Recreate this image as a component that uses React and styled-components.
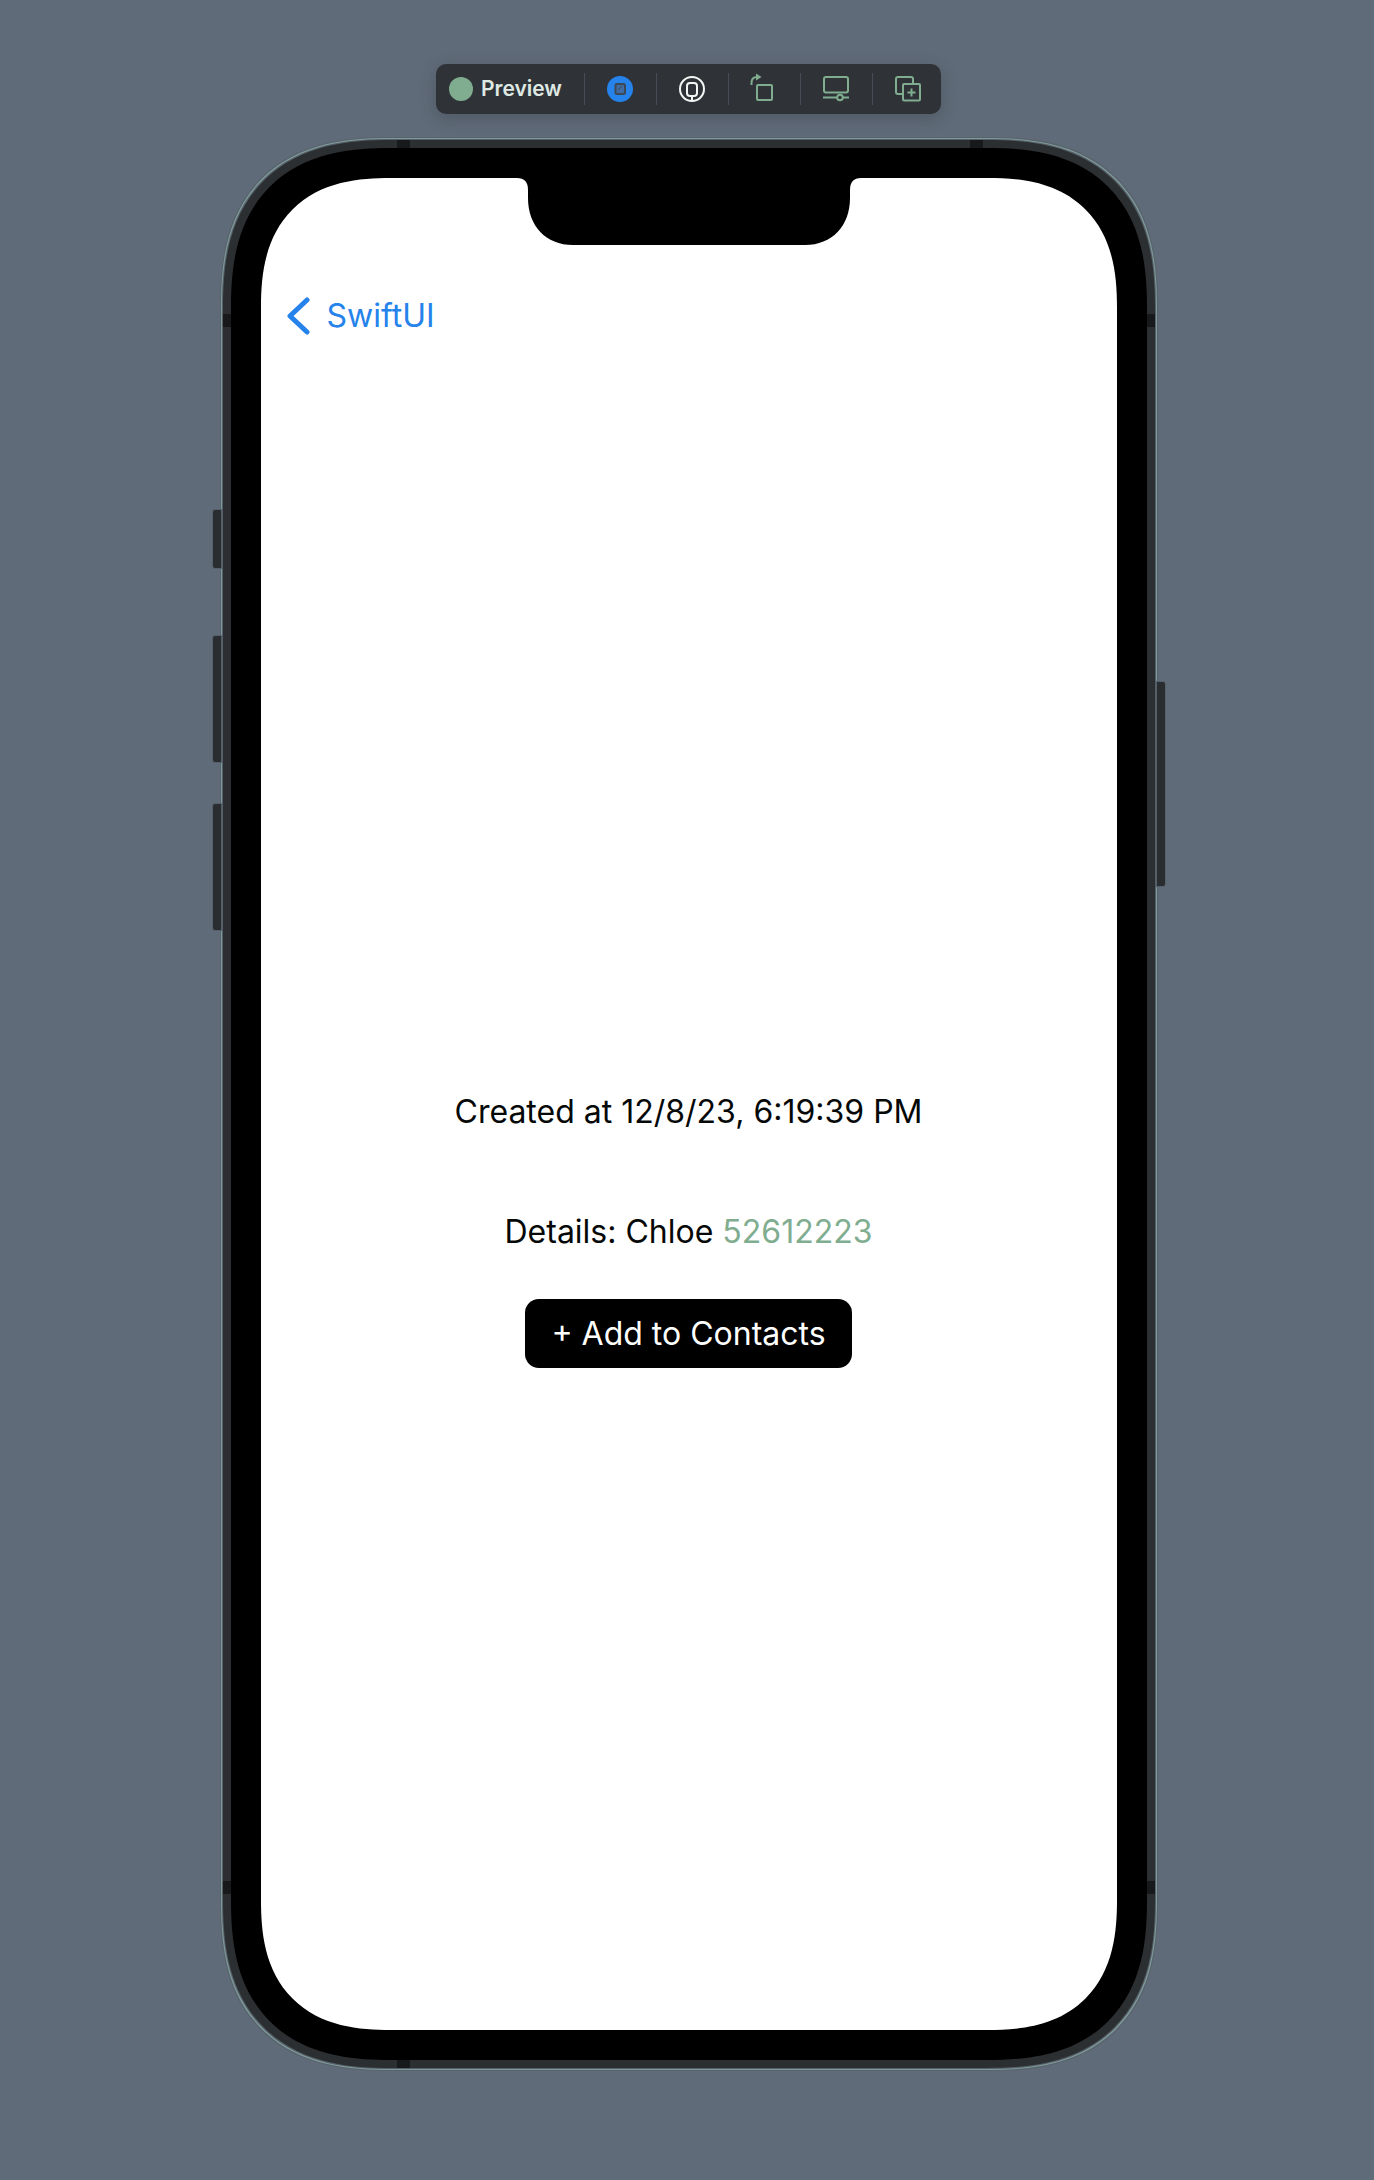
import React from "react";
import styled, { createGlobalStyle } from "styled-components";

const GlobalStyle = createGlobalStyle`
  * { box-sizing: border-box; }
  body {
    margin: 0;
    background: #606b79;
    font-family: Inter, "Liberation Sans", sans-serif;
  }
`;

const Page = styled.main`
  min-height: 100vh;
  display: flex;
  flex-direction: column;
  align-items: center;
  gap: 26px;
  padding: 64px 0 64px 3px;
`;

const Toolbar = styled.div`
  display: flex;
  align-items: center;
  height: 50px;
  border-radius: 10px;
  background: #2f3337;
  box-shadow: 0 4px 16px rgba(40, 46, 50, 0.3);
`;

const Status = styled.div`
  display: flex;
  align-items: center;
  gap: 8px;
  width: 148px;
  padding-left: 13px;
  color: #dfe9e3;
  font-size: 21px;
  line-height: 28px;
  font-weight: 600;
`;

const StatusDot = styled.span`
  width: 24px;
  height: 24px;
  border-radius: 50%;
  background: #80ad8f;
`;

const ToolButton = styled.button`
  display: flex;
  align-items: center;
  justify-content: center;
  width: ${(p) => (p.$last ? "69px" : "72px")};
  height: 32px;
  padding: 0 1px 0 0;
  border: 0;
  border-left: 1px solid #454c55;
  background: none;
  color: ${(p) => p.$color || "#80ad8f"};
`;

const Phone = styled.div`
  position: relative;
  width: 932px;
  max-width: 100%;
  padding: 8px;
  background: #2c2f32;
  border-radius: 140px;
  box-shadow: 0 0 0 1px #56606a, 0 0 0 2px #7e9a98, 0 0 0 3px #59636d;
  @supports (corner-shape: superellipse(1.32)) {
    border-radius: 168px;
    corner-shape: superellipse(1.32);
  }
`;

const Bezel = styled.div`
  position: relative;
  padding: 30px;
  background: #000;
  border-radius: 136px;
  @supports (corner-shape: superellipse(1.32)) {
    border-radius: 160px;
    corner-shape: superellipse(1.32);
  }
`;

const Screen = styled.div`
  display: flex;
  flex-direction: column;
  min-height: 1852px;
  padding: 117px 24px 0;
  background: #fff;
  border-radius: 108px;
  color: #050807;
  font-size: 32px;
  line-height: 42px;
  @supports (corner-shape: superellipse(1.32)) {
    border-radius: 130px;
    corner-shape: superellipse(1.32);
  }
`;

const SideButton = styled.span`
  position: absolute;
  ${(p) => p.$side}: -10px;
  top: ${(p) => p.$top}px;
  width: 8px;
  height: ${(p) => p.$length}px;
  border-radius: ${(p) => (p.$side === "left" ? "2px 0 0 2px" : "0 2px 2px 0")};
  background: #2a2d30;
  box-shadow: 0 0 0 1px #56606a;
`;

const Band = styled.span`
  position: absolute;
  ${(p) => p.$edge}: 0;
  ${(p) => p.$from}: ${(p) => p.$at}px;
  width: ${(p) => (p.$edge === "top" || p.$edge === "bottom" ? 13 : 8)}px;
  height: ${(p) => (p.$edge === "top" || p.$edge === "bottom" ? 8 : 13)}px;
  background: #17191a;
`;

const Notch = styled.svg`
  position: absolute;
  top: 30px;
  left: 50%;
  width: 344px;
  height: 68px;
  transform: translateX(-50%);
`;

const BackLink = styled.a`
  display: flex;
  align-items: center;
  align-self: flex-start;
  gap: 17px;
  color: #2583eb;
  text-decoration: none;
`;

const Details = styled.section`
  display: flex;
  flex-direction: column;
  align-items: center;
  padding-top: 754px;
`;

const Created = styled.p`
  margin: 0 0 78px;
`;

const Contact = styled.p`
  margin: 0 0 46px;
`;

const PhoneLink = styled.a`
  color: #80ad8f;
  text-decoration: none;
`;

const AddButton = styled.button`
  height: 69px;
  padding: 0 26px;
  border: 0;
  border-radius: 14px;
  background: #000;
  color: #fff;
  font: inherit;
`;

const Icon = ({ children }) => (
  <svg width="28" height="28" viewBox="0 0 28 28" overflow="visible" fill="none" stroke="currentColor" strokeWidth="2" aria-hidden="true">
    {children}
  </svg>
);

export default function App() {
  return (
    <>
      <GlobalStyle />
      <Page>
        <Toolbar role="toolbar" aria-label="Preview">
          <Status><StatusDot />Preview</Status>
          <ToolButton $color="#2583eb" aria-label="Live preview">
            <Icon>
              <circle cx="14" cy="14" r="13" fill="currentColor" stroke="none" />
              <rect x="9.5" y="9" width="9.5" height="10" rx="1.5" fill="#3f6ca3" stroke="#3c4854" />
              <path d="M12 15l4-4" stroke="#3c4854" strokeWidth="1" />
            </Icon>
          </ToolButton>
          <ToolButton $color="#f2f7f4" aria-label="Selectable preview">
            <Icon>
              <circle cx="14" cy="14" r="12" />
              <rect x="9" y="8" width="10" height="13" rx="3" />
              <path d="M14 21v5" />
            </Icon>
          </ToolButton>
          <ToolButton aria-label="Rotate">
            <Icon>
              <rect x="7" y="10" width="15" height="15" rx="1" />
              <path d="M1.5 10V8Q1.500 2 7 2" />
              <path d="M6 -1.500L11.500 2L6 5.500z" fill="currentColor" stroke="none" />
            </Icon>
          </ToolButton>
          <ToolButton aria-label="Device settings">
            <Icon>
              <rect x="2" y="2" width="24" height="15.500" rx="2" />
              <path d="M1 22.500h14M21 22.500h6" />
              <circle cx="18" cy="22.500" r="2.800" />
            </Icon>
          </ToolButton>
          <ToolButton $last aria-label="Duplicate preview">
            <Icon>
              <path d="M9 19H5q-2 0-2-2V4q0-2 2-2h13q2 0 2 2v4" />
              <rect x="10" y="9" width="17" height="16.500" rx="1" />
              <path d="M18.500 13.500v8M14.500 17.500h8" />
            </Icon>
          </ToolButton>
        </Toolbar>
        <Phone>
          <SideButton $side="left" $top={370} $length={58} />
          <SideButton $side="left" $top={496} $length={126} />
          <SideButton $side="left" $top={664} $length={126} />
          <SideButton $side="right" $top={542} $length={204} />
          <Band $edge="top" $from="left" $at={174} />
          <Band $edge="top" $from="right" $at={172} />
          <Band $edge="bottom" $from="left" $at={174} />
          <Band $edge="left" $from="top" $at={174} />
          <Band $edge="right" $from="top" $at={174} />
          <Band $edge="left" $from="bottom" $at={174} />
          <Band $edge="right" $from="bottom" $at={174} />
          <Bezel>
            <Notch viewBox="0 0 344 68" aria-hidden="true">
              <path d="M0 0Q11 0 11 12V20C11 48 29 67 56 67H288C315 67 333 48 333 20V12Q333 0 344 0Z" />
            </Notch>
            <Screen>
              <BackLink href="#">
                <svg width="25" height="40" viewBox="0 0 25 40" fill="none" stroke="currentColor" strokeWidth="5" strokeLinecap="round" strokeLinejoin="round" aria-hidden="true">
                  <path d="M22 4L5 20L22 36" />
                </svg>
                SwiftUI
              </BackLink>
              <Details>
                <Created>Created at 12/8/23, 6:19:39 PM</Created>
                <Contact>Details: Chloe <PhoneLink href="tel:52612223">52612223</PhoneLink></Contact>
                <AddButton>+ Add to Contacts</AddButton>
              </Details>
            </Screen>
          </Bezel>
        </Phone>
      </Page>
    </>
  );
}
